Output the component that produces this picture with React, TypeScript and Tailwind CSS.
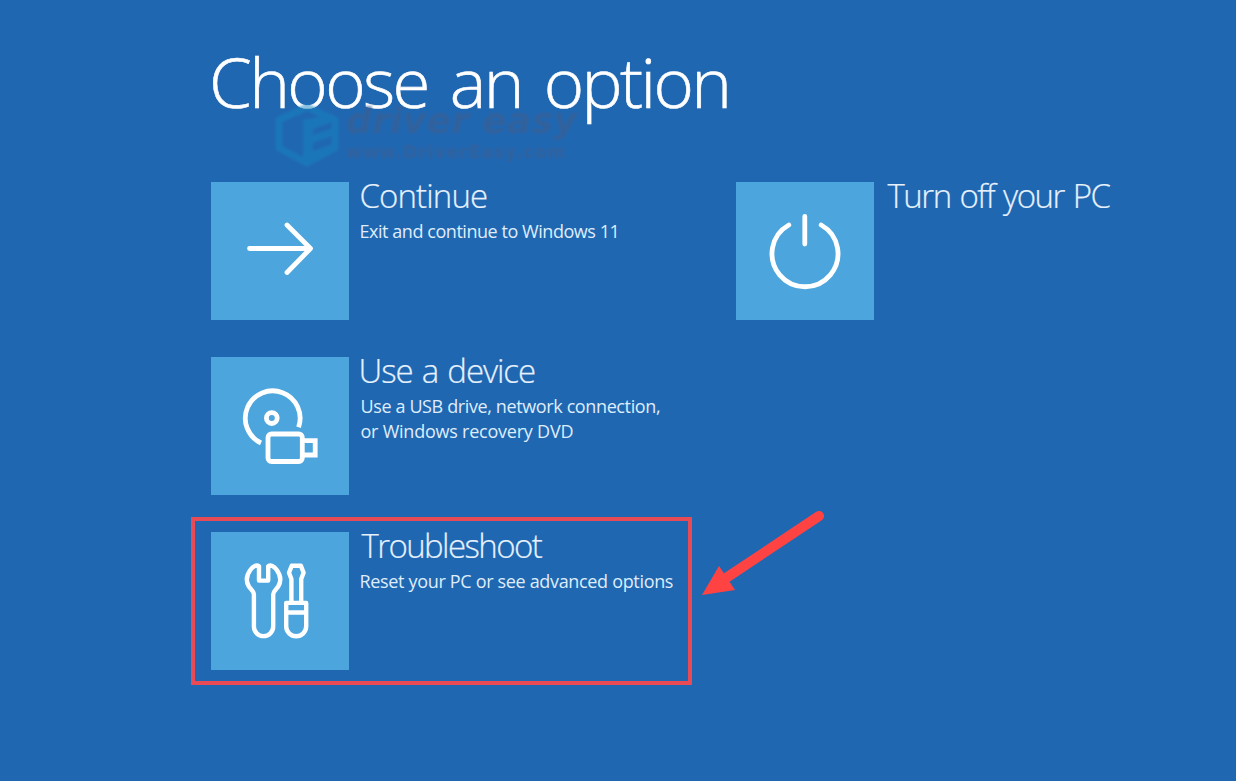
import React from 'react';

interface OptionTileProps {
  title: string;
  titleClassName: string;
  lines?: { text: string; className: string }[];
  icon: React.ReactNode;
  highlighted?: boolean;
}

const OptionTile: React.FC<OptionTileProps> = ({
  title,
  titleClassName,
  lines = [],
  icon,
  highlighted = false,
}) => {
  return (
    <button type="button" className="relative flex h-[138px] items-start text-left">
      {highlighted && (
        <span className="absolute -left-5 -top-[15px] h-[168px] w-[501px] border-4 border-[#e84a56]" />
      )}
      <span className="h-[138px] w-[138px] shrink-0 bg-[#4ca5dd]">{icon}</span>
      <span className="-mt-1 ml-[10.5px] flex flex-col items-start whitespace-nowrap">
        <span
          className={`text-[33px] font-light leading-9 text-[#e6f1fc] [-webkit-text-stroke:0.2px_#e6f1fc] ${titleClassName}`}
        >
          {title}
        </span>
        <span className="mt-[5px] flex flex-col items-start">
          {lines.map((line) => (
            <span
              key={line.text}
              className={`text-[18px] leading-[25px] text-[#dfedfb] ${line.className}`}
            >
              {line.text}
            </span>
          ))}
        </span>
      </span>
    </button>
  );
};

const iconProps = {
  viewBox: '0 0 138 138',
  fill: 'none',
  stroke: 'white',
  strokeWidth: 4.8,
  className: 'block h-[138px] w-[138px]',
};

const ArrowIcon = () => (
  <svg {...iconProps} strokeLinecap="round" strokeLinejoin="round">
    <path d="M38.5 66.5H99M76 43L99.5 66.5L76 90.5" />
  </svg>
);

const PowerIcon = () => (
  <svg {...iconProps} strokeLinecap="round">
    <path d="M68.8 34.5V62M52.8 43A33 33 0 1 0 85.2 43" />
  </svg>
);

const DeviceIcon = () => (
  <svg {...iconProps}>
    <path d="M50 86A27.4 27.4 0 1 1 87.6 70.2" />
    <circle cx="60.8" cy="61.1" r="5.4" />
    <rect x="57" y="77" width="34.3" height="27.5" rx="3.5" />
    <path d="M92 83.7H104.2V98H92" />
  </svg>
);

const ToolsIcon = () => (
  <svg {...iconProps} strokeWidth={4.4} strokeLinejoin="round">
    <path d="M48 34.2V48.6H57.2V34.2C59.5 32.5 63 34 65.8 38C69.8 43.5 70.2 49.5 67.2 54.5C65.3 57.5 62.2 59 62.2 62.5V94.5A9.65 9.65 0 0 1 42.9 94.5V62.5C42.9 59 39.8 57.5 37.9 54.5C34.9 49.5 35.3 43.5 39.3 38C42.1 34 45.7 32.5 48 34.2Z" />
    <path d="M80.4 70.7V47L78 40.8L80.7 33.7H89.9L92.6 40.8L90.2 47V70.7" />
    <path d="M75.2 70.9H95.2V94.3A10 10 0 0 1 75.2 94.3ZM75.2 80.5H95.2" />
  </svg>
);

const Watermark = () => (
  <div className="pointer-events-none absolute left-[273px] top-[100px] flex items-start">
    <svg viewBox="0 0 68 68" className="h-[68px] w-[68px] opacity-50 blur-[0.8px]" fill="none">
      <path
        d="M34 7L62 20V48L34 63L6 48V20Z"
        stroke="#1684c0"
        strokeWidth="7"
        strokeLinejoin="round"
      />
      <path
        d="M30 20L60 14V22L40 29V35L60 28V36L40 43V51L62 43V50L34 63L30 60Z"
        fill="#1684c0"
      />
    </svg>
    <div className="ml-[5px] mt-px flex flex-col whitespace-nowrap font-['DejaVu_Sans',sans-serif] text-[#3b5f91] opacity-65 blur-[0.8px]">
      <span className="text-[36px] font-bold italic leading-[40px] tracking-[0.3px]">
        driver easy
      </span>
      <span className="text-[17px] font-bold leading-[22px] tracking-[1.1px]">
        www.DriverEasy.com
      </span>
    </div>
  </div>
);

const PointerArrow = () => (
  <svg
    viewBox="0 0 130 90"
    className="pointer-events-none absolute left-[698px] top-[507px] h-[90px] w-[130px]"
  >
    <path d="M121 9L25 73" stroke="#ff4343" strokeWidth="10" strokeLinecap="round" />
    <path d="M4 88L21 59L37 83Z" fill="#ff4343" />
  </svg>
);

export default function App() {
  return (
    <main className="relative h-[781px] w-[1236px] overflow-hidden bg-[#2067b2] pl-[211px] pt-[41px] font-['Open_Sans',sans-serif]">
      <h1 className="-ml-[2px] whitespace-nowrap text-[69px] font-light leading-[80px] tracking-[-2.6px] text-white [word-spacing:6.5px] [-webkit-text-stroke:0.6px_white]">
        Choose an option
      </h1>
      <div className="mt-[61px] grid grid-cols-[525px_400px] gap-y-[37px]">
        <OptionTile
          title="Continue"
          titleClassName="tracking-[-0.9px]"
          lines={[
            {
              text: 'Exit and continue to Windows 11',
              className: 'tracking-[-0.45px]',
            },
          ]}
          icon={<ArrowIcon />}
        />
        <OptionTile
          title="Turn off your PC"
          titleClassName="ml-[3px] tracking-[-1.5px] [word-spacing:1.8px]"
          icon={<PowerIcon />}
        />
        <div className="col-span-2">
          <OptionTile
            title="Use a device"
            titleClassName="-ml-px tracking-[-1.1px] [word-spacing:1.8px]"
            lines={[
              { text: 'Use a USB drive, network connection,', className: 'ml-px tracking-[-0.38px]' },
              { text: 'or Windows recovery DVD', className: 'ml-px tracking-[-0.23px]' },
            ]}
            icon={<DeviceIcon />}
          />
        </div>
        <div className="col-span-2">
          <OptionTile
            title="Troubleshoot"
            titleClassName="ml-[2px] tracking-[-1.6px]"
            lines={[
              { text: 'Reset your PC or see advanced options', className: 'tracking-[-0.33px]' },
            ]}
            icon={<ToolsIcon />}
            highlighted
          />
        </div>
      </div>
      <Watermark />
      <PointerArrow />
    </main>
  );
}
